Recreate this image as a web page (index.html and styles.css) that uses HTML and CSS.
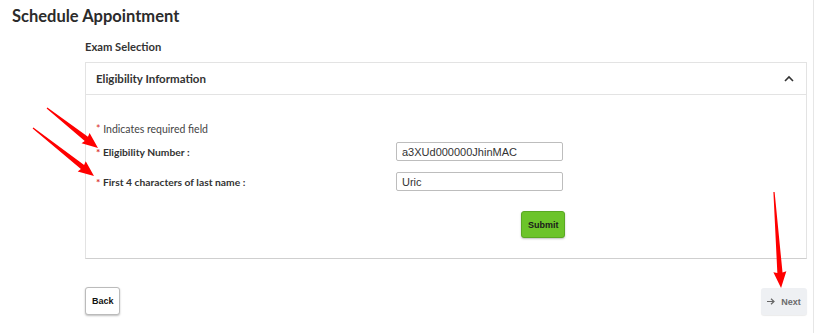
FILE: index.html
```html
<!DOCTYPE html>
<html lang="en">
<head>
    <meta charset="UTF-8">
    <title>Schedule Appointment</title>
    <link rel="stylesheet" href="styles.css">
</head>
<body>
    <div class="page">
        <h1 class="page-title">Schedule Appointment</h1>

        <div class="content">
            <h2 class="step-title">Exam Selection</h2>

            <div class="card">
                <div class="card-header">
                    <span>Eligibility Information</span>
                    <svg class="chevron" width="10" height="7" viewBox="0 0 10 7">
                        <path d="M1 6 L5 2 L9 6" fill="none" stroke="#333" stroke-width="1.6"/>
                    </svg>
                </div>
                <div class="card-body">
                    <p class="hint"><span class="req">*</span> Indicates required field</p>
                    <div class="field">
                        <label><span class="req">*</span> Eligibility Number :</label>
                        <input type="text" value="a3XUd000000JhinMAC">
                    </div>
                    <div class="field">
                        <label><span class="req">*</span> First 4 characters of last name :</label>
                        <input type="text" value="Uric">
                    </div>
                    <div class="submit-row">
                        <button class="btn btn-submit">Submit</button>
                    </div>
                </div>
            </div>

            <div class="nav">
                <button class="btn btn-back">Back</button>
                <button class="btn btn-next">
                    <svg width="8" height="7" viewBox="0 0 8 7">
                        <path d="M0 3.5 H7 M4 0.7 L7 3.5 L4 6.3" fill="none" stroke="#666" stroke-width="1.2"/>
                    </svg>
                    <span>Next</span>
                </button>
            </div>
        </div>
    </div>

    <!-- annotation arrows -->
    <svg class="marks" width="816" height="333" viewBox="0 0 816 333">
        <g fill="#f00">
            <path transform="translate(47 108) rotate(38.1)" d="M0 -0.6 L50 -2.6 L49 -6.5 L64.8 0 L49 6.5 L50 2.6 L0 0.6 Z"/>
            <path transform="translate(33 128) rotate(38.2)" d="M0 -0.6 L63 -2.6 L62 -6.5 L77.6 0 L62 6.5 L63 2.6 L0 0.6 Z"/>
            <path transform="translate(774 192) rotate(85.8)" d="M0 -0.6 L81 -2.6 L80 -6.5 L96.3 0 L80 6.5 L81 2.6 L0 0.6 Z"/>
        </g>
    </svg>
</body>
</html>
```

FILE: styles.css
```css
body {
    margin: 0;
    font-family: Lato, 'Open Sans', sans-serif;
    color: #333;
    background: #fff;
}

.page {
    width: 813px;
    height: 333px;
    border-right: 1px solid #e6e6e6;
}

.page-title {
    margin: 0;
    padding: 4px 0 0 12px;
    font-size: 16.5px;
    font-weight: 700;
    line-height: 24px;
    color: #2b2b2b;
}

.content {
    margin: 0 6px 0 85px;
}

.step-title {
    margin: 11px 0 7px 0;
    font-size: 11.2px;
    font-weight: 700;
    line-height: 16px;
}

.card {
    border: 1px solid #e3e3e3;
    border-bottom-color: #cfcfcf;
}

.card-header {
    display: flex;
    justify-content: space-between;
    align-items: center;
    height: 31px;
    padding: 0 12px 0 10px;
    border-bottom: 1px solid #e3e3e3;
    font-size: 11.5px;
    font-weight: 700;
}

.card-body {
    padding: 27px 10px 20px 10px;
}

.hint {
    margin: 0 0 6px 0;
    font-size: 10.5px;
    line-height: 14px;
    color: #444;
}

.req {
    color: #d9302c;
}

.field {
    display: flex;
    align-items: center;
    height: 19px;
    margin-bottom: 11px;
}

.field label {
    width: 300px;
    font-size: 10.3px;
    font-weight: 700;
}

.field input {
    width: 167px;
    height: 19px;
    box-sizing: border-box;
    padding: 0 5px;
    border: 1px solid #bdbdbd;
    border-radius: 2px;
    font-family: 'Liberation Sans', Arial, sans-serif;
    font-size: 11px;
    color: #333;
}

.submit-row {
    display: flex;
    justify-content: flex-end;
    width: 469px;
    padding-top: 9px;
}

.btn {
    font-family: 'Liberation Sans', Arial, sans-serif;
    font-size: 9px;
    font-weight: bold;
    border-radius: 3px;
    cursor: pointer;
}

.btn-submit {
    width: 44px;
    height: 27px;
    background: #6cc42a;
    border: 1px solid #5aa823;
    color: #1a1a1a;
    box-shadow: 0 1px 2px rgba(0,0,0,0.25);
}

.nav {
    display: flex;
    justify-content: space-between;
    align-items: flex-start;
    margin-top: 28px;
}

.btn-back {
    width: 35px;
    height: 28px;
    background: #fff;
    border: 1px solid #bbb;
    color: #111;
    box-shadow: 0 1px 2px rgba(0,0,0,0.25);
}

.btn-next {
    display: flex;
    align-items: center;
    justify-content: center;
    gap: 6px;
    width: 46px;
    height: 27px;
    margin-top: 1px;
    padding: 0;
    background: #eef0f3;
    border: none;
    color: #6b6b6b;
    box-shadow: 0 1px 1px rgba(0,0,0,0.08);
}

.marks {
    position: absolute;
    left: 0;
    top: 0;
    pointer-events: none;
}
```
